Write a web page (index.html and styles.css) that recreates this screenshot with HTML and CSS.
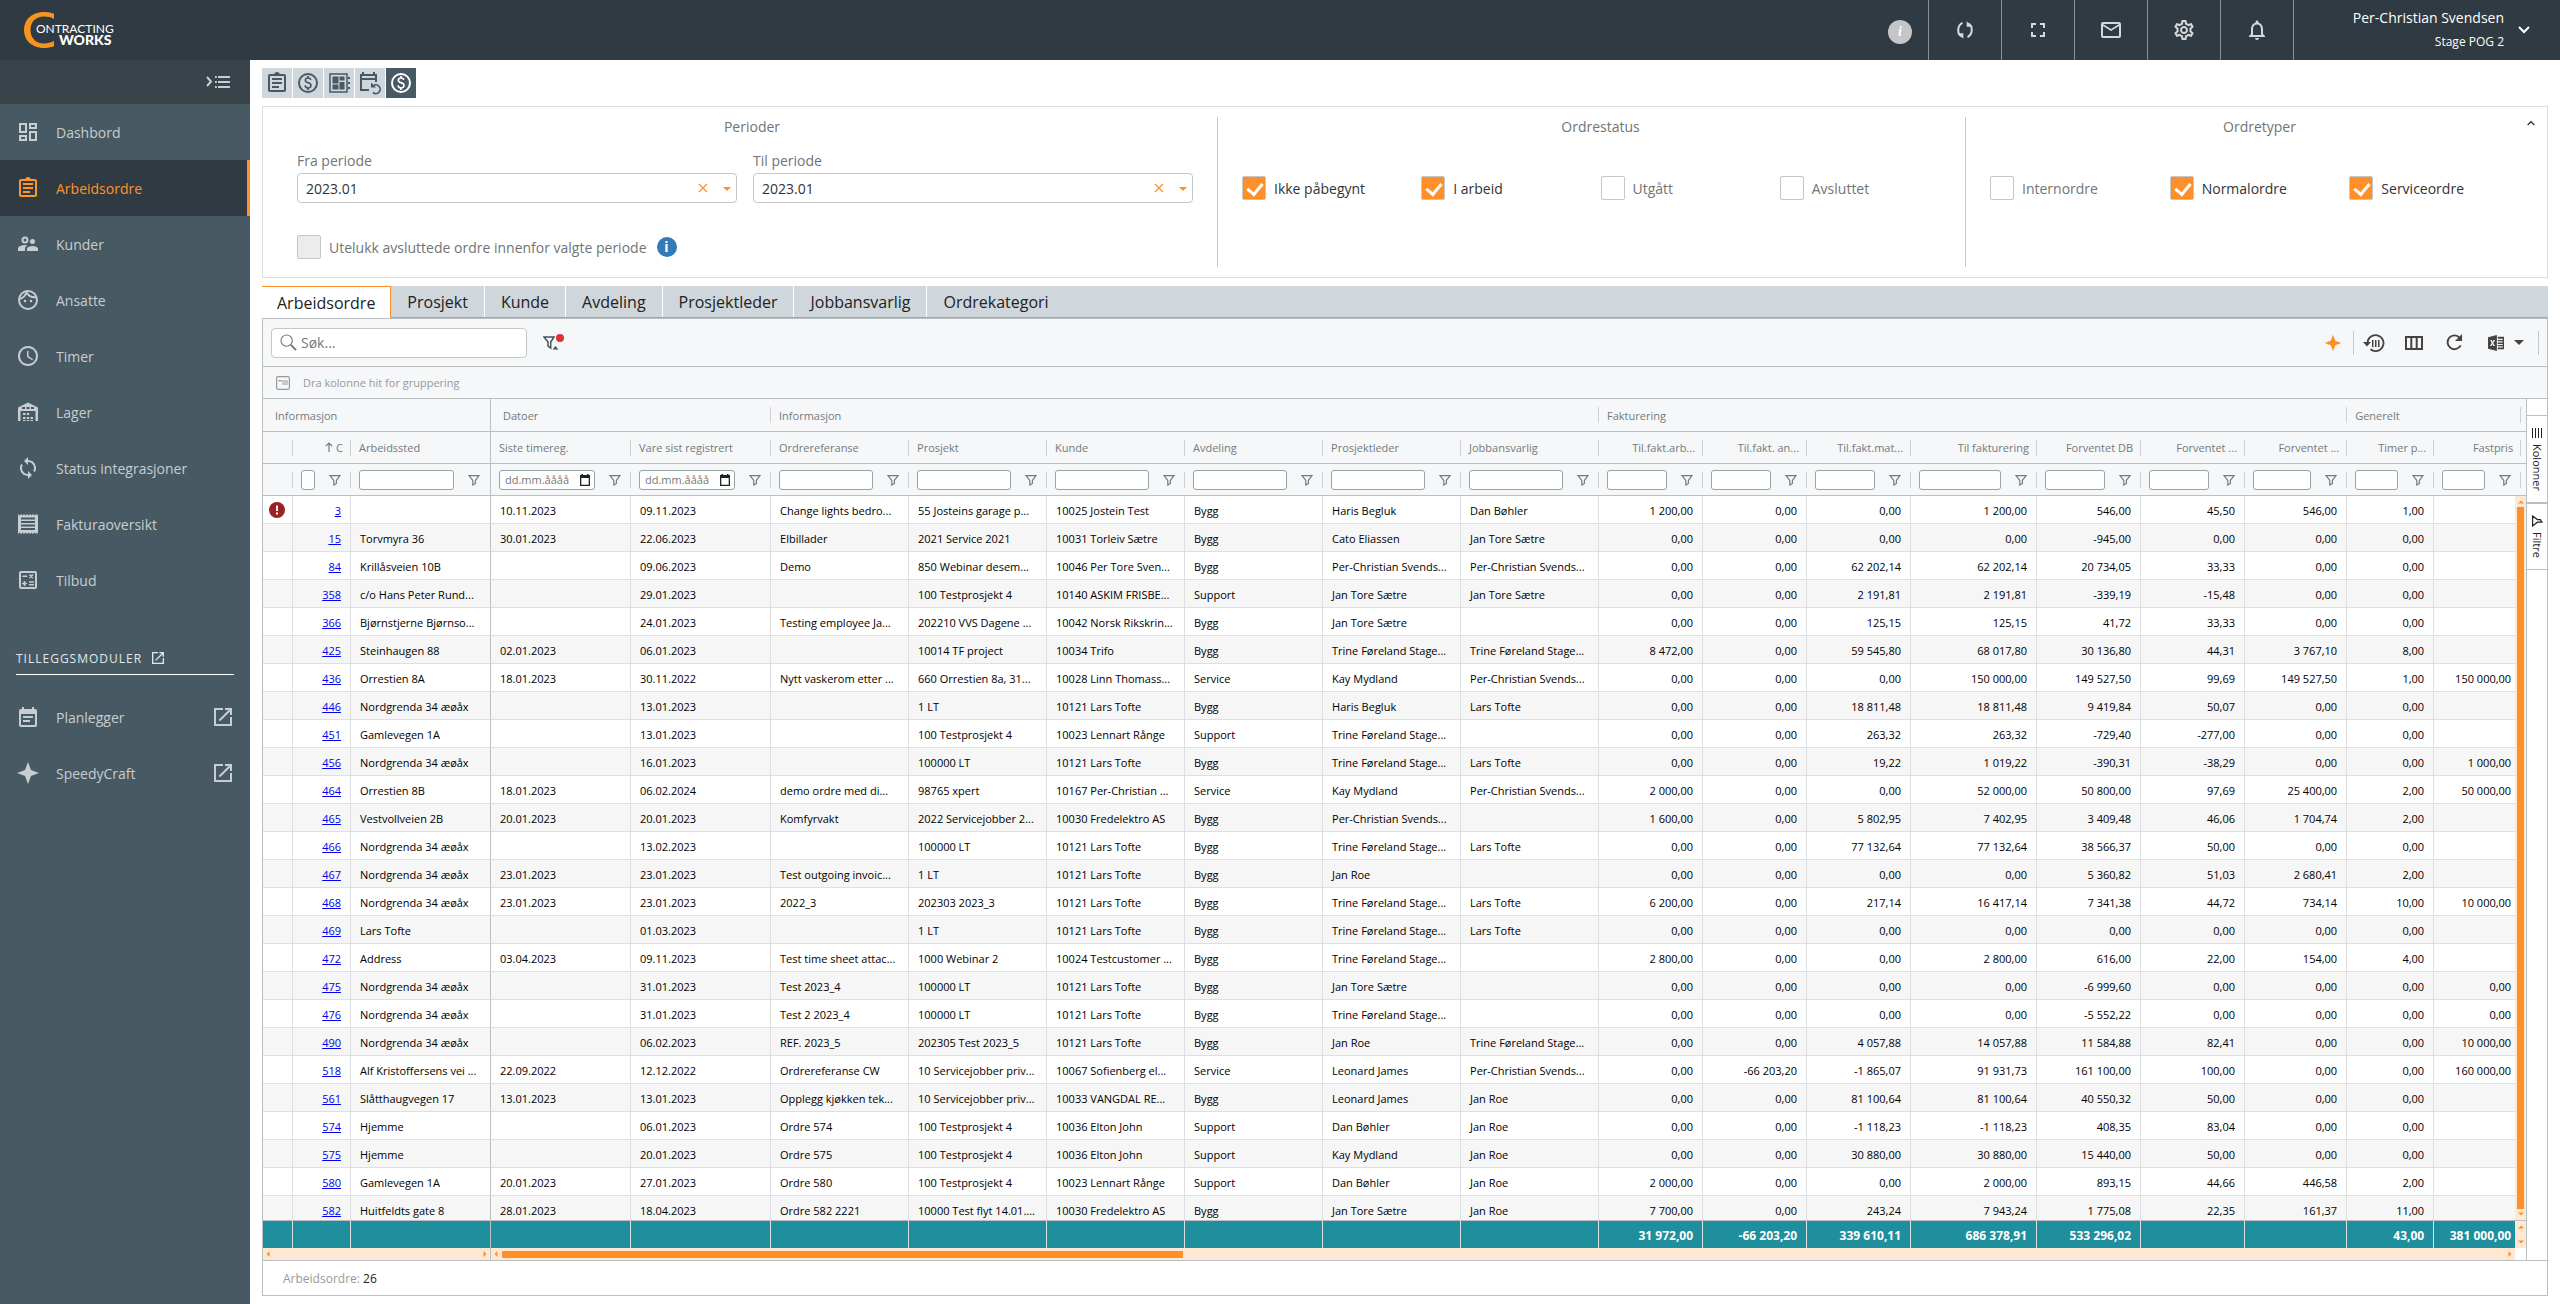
FILE: index.html
```html
<!DOCTYPE html>
<html lang="no">
<head>
    <meta charset="UTF-8">
    <meta name="viewport" content="width=device-width, initial-scale=1.0">
    <title>Contracting Works - Arbeidsordre</title>
    <link rel="stylesheet" href="styles.css">
</head>
<body>

<svg class="sprite" aria-hidden="true">
    <symbol id="i-dashboard" viewBox="0 0 24 24"><path d="M19 5v2h-4V5h4M9 5v6H5V5h4m10 8v6h-4v-6h4M9 17v2H5v-2h4M21 3h-8v6h8V3zM11 3H3v10h8V3zm10 8h-8v10h8V11zm-10 4H3v6h8v-6z"/></symbol>
    <symbol id="i-assignment" viewBox="0 0 24 24"><path d="M7 15h7v2H7zm0-4h10v2H7zm0-4h10v2H7zm12-4h-4.18C14.4 1.84 13.3 1 12 1c-1.3 0-2.4.84-2.82 2H5c-1.1 0-2 .9-2 2v14c0 1.1.9 2 2 2h14c1.1 0 2-.9 2-2V5c0-1.1-.9-2-2-2zm0 16H5V5h14v14z"/></symbol>
    <symbol id="i-people" viewBox="0 0 24 24"><path fill-rule="evenodd" d="M16.5 12a2.5 2.5 0 1 0 0-5 2.5 2.5 0 0 0 0 5zM9 11.500a3.500 3.500 0 1 0 0-7 3.500 3.500 0 0 0 0 7zm0-2a1.500 1.500 0 1 1 0-3 1.500 1.500 0 0 1 0 3zM16.5 14c-1.830 0-5.500.92-5.500 2.750V19h11v-2.250c0-1.830-3.670-2.750-5.500-2.750zM9 13c-2.330 0-7 1.170-7 3.500V19h7v-2.250c0-.85.33-2.340 2.370-3.470C10.500 13.100 9.660 13 9 13z"/></symbol>
    <symbol id="i-face" viewBox="0 0 24 24"><circle cx="12" cy="12" r="9" fill="none" stroke="currentColor" stroke-width="2"/><path fill="none" stroke="currentColor" stroke-width="2" d="M3.500 11c3.500-1 6-3.500 7-6.500 2 3.500 5.500 5 9.500 4.700"/><circle cx="9" cy="13" r="1.300"/><circle cx="15" cy="13" r="1.300"/></symbol>
    <symbol id="i-clock" viewBox="0 0 24 24"><path d="M11.990 2C6.470 2 2 6.480 2 12s4.470 10 9.990 10C17.520 22 22 17.520 22 12S17.520 2 11.990 2zM12 20c-4.420 0-8-3.580-8-8s3.580-8 8-8 8 3.580 8 8-3.580 8-8 8zm.5-13H11v6l5.250 3.150.75-1.230-4.500-2.670z"/></symbol>
    <symbol id="i-warehouse" viewBox="0 0 24 24"><path fill-rule="evenodd" d="M2 21V7.500L12 2.500l10 5V21h-2.500V11h-15v10zM6 9h3V7H6zm4.500 0h3V7h-3zM15 9h3V7h-3zM7 13h2.500v2H7zm3.800 0h2.400v2h-2.400zM7 17h2.500v2H7zm3.800 0h2.400v2h-2.400zm3.700 0H17v2h-2.500zM7 20h2.500v1H7zm3.800 0h2.400v1h-2.400zm3.700 0H17v1h-2.500z"/></symbol>
    <symbol id="i-sync" viewBox="0 0 24 24"><path d="M12 4V1L8 5l4 4V6c3.310 0 6 2.690 6 6 0 1.010-.25 1.970-.7 2.800l1.460 1.460C19.540 15.030 20 13.570 20 12c0-4.420-3.580-8-8-8zm0 14c-3.310 0-6-2.690-6-6 0-1.010.25-1.970.7-2.800L5.240 7.740C4.460 8.970 4 10.430 4 12c0 4.420 3.580 8 8 8v3l4-4-4-4v3z"/></symbol>
    <symbol id="i-receipt" viewBox="0 0 24 24"><path fill-rule="evenodd" d="M2 2l1.500 1.500L5 2l1.500 1.500L8 2l1.500 1.500L11 2l1.500 1.500L14 2l1.500 1.500L17 2l1.500 1.500L20 2l1 1.500L22 2v20l-1-1.500-1 1.500-1.500-1.500L17 22l-1.500-1.500L14 22l-1.500-1.500L11 22l-1.500-1.500L8 22l-1.500-1.500L5 22l-1.500-1.500L2 22zM5 5.500v2h14v-2zM5 9v2h14V9zm0 3.500v2h14v-2zM5 16v2h14v-2z"/></symbol>
    <symbol id="i-calc" viewBox="0 0 24 24"><path fill-rule="evenodd" d="M5 3h14a2 2 0 0 1 2 2v14a2 2 0 0 1-2 2H5a2 2 0 0 1-2-2V5a2 2 0 0 1 2-2zm0 2v14h14V5z"/><path fill="none" stroke="currentColor" stroke-width="1.600" d="M6.200 8.200h5M13.500 6.500l3.500 3.500m0-3.500L13.500 10M13 14h5M13 16.800h5M6 15.500h5M8.500 13v5"/></symbol>
    <symbol id="i-open" viewBox="0 0 24 24"><path d="M19 19H5V5h7V3H3v18h18v-9h-2v7zM14 3v2h3.590l-9.830 9.830 1.410 1.410L19 6.410V10h2V3h-7z"/></symbol>
    <symbol id="i-note" viewBox="0 0 24 24"><path d="M19 4h-1V2h-2v2H8V2H6v2H5a2 2 0 0 0-2 2v14a2 2 0 0 0 2 2h14a2 2 0 0 0 2-2V6a2 2 0 0 0-2-2zm0 16H5V9h14v11zM7 11h10v2H7zm0 4h7v2H7z"/></symbol>
    <symbol id="i-star" viewBox="0 0 24 24"><path d="M12 1l3 8 8 3-8 3-3 8-3-8-8-3 8-3z"/></symbol>
    <symbol id="i-menu" viewBox="0 0 24 16"><path d="M9 2h1.800v2H9zm3 0h12v2H12zM9 7h1.800v2H9zm3 0h12v2H12zM9 12h1.800v2H9zm3 0h12v2H12z"/><path fill="none" stroke="currentColor" stroke-width="2" d="M1 3l4 4.500L1 12"/></symbol>
    <symbol id="i-money" viewBox="0 0 24 24"><circle cx="12" cy="12" r="9" fill="none" stroke="currentColor" stroke-width="2"/><path d="M12.890 11.100c-1.780-.59-2.640-.96-2.640-1.900 0-1.020 1.110-1.390 1.810-1.390 1.310 0 1.790.99 1.900 1.340l1.580-.67c-.15-.44-.82-1.910-2.660-2.230V5h-1.750v1.260c-2.600.56-2.620 2.850-2.620 2.960 0 2.270 2.250 2.910 3.350 3.310 1.580.56 2.280 1.070 2.280 2.030 0 1.130-1.050 1.610-1.980 1.610-1.820 0-2.340-1.870-2.400-2.090l-1.660.67c.63 2.190 2.280 2.780 2.900 2.960V19h1.750v-1.240c.52-.09 3.020-.59 3.020-3.220.01-1.390-.6-2.610-3.010-3.440z"/></symbol>
    <symbol id="i-board" viewBox="0 0 24 24"><path fill="none" stroke="currentColor" stroke-width="1.500" d="M3 3h17v18H3z"/><path d="M5.500 5.500h6v7h-6zM5.500 13.500h6v5h-6zM12.500 5.500h5v4h-5zM12.500 11h5v7.500h-5zM21 6h2v2h-2zm0 5h2v2h-2zm0 5h2v2h-2z"/></symbol>
    <symbol id="i-calback" viewBox="0 0 24 24"><path d="M19 3h-2V1h-2v2H6V1H4v2H2v17h9v-2H4V9h13v2h2zM17 7H4V5h13z"/><path fill="none" stroke="currentColor" stroke-width="1.700" d="M15 21.500a4.300 4.300 0 1 0 0-6.500"/><path d="M13 11.500v5h5z"/></symbol>
    <symbol id="i-loop" viewBox="0 0 24 24"><path fill="none" stroke="currentColor" stroke-width="2.400" d="M9 3.500C2.500 6.500 2.500 16.500 7.500 19.500M15 20.500c6.500-3 6.500-13 1.500-16"/><path d="M2.500 16h7.500v6.500zM21.500 8H14V1.500z"/></symbol>
    <symbol id="i-full" viewBox="0 0 24 24"><path d="M5 5h5v2H7v3H5V5zm9 0h5v5h-2V7h-3V5zm3 9h2v5h-5v-2h3v-3zM5 14h2v3h3v2H5v-5z"/></symbol>
    <symbol id="i-mail" viewBox="0 0 24 24"><path d="M22 6c0-1.100-.9-2-2-2H4c-1.100 0-2 .9-2 2v12c0 1.100.9 2 2 2h16c1.100 0 2-.9 2-2V6zm-2 0l-8 5-8-5h16zm0 12H4V8l8 5 8-5v10z"/></symbol>
    <symbol id="i-gear" viewBox="0 0 24 24"><path d="M19.430 12.980c.04-.32.07-.64.07-.98 0-.34-.03-.66-.07-.98l2.110-1.650c.19-.15.24-.42.12-.64l-2-3.460c-.09-.16-.26-.25-.44-.25-.06 0-.12.01-.17.03l-2.490 1c-.52-.4-1.080-.73-1.690-.98l-.38-2.650C14.460 2.180 14.250 2 14 2h-4c-.25 0-.46.18-.49.42l-.38 2.650c-.61.25-1.170.59-1.690.98l-2.490-1c-.06-.02-.12-.03-.18-.03-.17 0-.34.09-.43.25l-2 3.460c-.13.22-.07.49.12.64l2.110 1.650c-.04.32-.07.65-.07.98 0 .33.03.66.07.98l-2.110 1.650c-.19.15-.24.42-.12.64l2 3.460c.09.16.26.25.44.25.06 0 .12-.01.17-.03l2.490-1c.52.4 1.080.73 1.690.98l.38 2.650c.03.24.24.42.49.42h4c.25 0 .46-.18.49-.42l.38-2.650c.61-.25 1.170-.59 1.690-.98l2.490 1c.06.02.12.03.18.03.17 0 .34-.09.43-.25l2-3.460c.12-.22.07-.49-.12-.64l-2.110-1.650zm-1.980-1.710c.04.31.05.52.05.73 0 .21-.02.43-.05.73l-.14 1.130.89.7 1.080.84-.7 1.210-1.270-.51-1.040-.42-.9.68c-.43.32-.84.56-1.250.73l-1.060.43-.16 1.130-.2 1.350h-1.400l-.19-1.350-.16-1.130-1.060-.43c-.43-.18-.83-.41-1.230-.71l-.91-.7-1.060.43-1.270.51-.7-1.210 1.080-.84.89-.7-.14-1.130c-.03-.31-.05-.54-.05-.74s.02-.43.05-.73l.14-1.130-.89-.7-1.080-.84.7-1.210 1.270.51 1.040.42.9-.68c.43-.32.84-.56 1.250-.73l1.060-.43.16-1.130.2-1.350h1.390l.19 1.350.16 1.130 1.060.43c.43.18.83.41 1.230.71l.91.7 1.060-.43 1.270-.51.7 1.210-1.070.85-.89.7.14 1.130zM12 8c-2.210 0-4 1.790-4 4s1.790 4 4 4 4-1.790 4-4-1.790-4-4-4zm0 6c-1.100 0-2-.9-2-2s.9-2 2-2 2 .9 2 2-.9 2-2 2z"/></symbol>
    <symbol id="i-bell" viewBox="0 0 24 24"><path d="M12 22c1.100 0 2-.9 2-2h-4c0 1.100.9 2 2 2zm6-6v-5c0-3.070-1.630-5.640-4.500-6.320V4c0-.83-.67-1.500-1.500-1.500s-1.500.67-1.500 1.500v.68C7.640 5.360 6 7.920 6 11v5l-2 2v1h16v-1l-2-2zm-2 1H8v-6c0-2.480 1.510-4.500 4-4.500s4 2.020 4 4.500v6z"/></symbol>
    <symbol id="i-chevron" viewBox="0 0 12 8"><path fill="none" stroke="currentColor" stroke-width="2" d="M1 1l5 5 5-5"/></symbol>
    <symbol id="i-caret" viewBox="0 0 8 4"><path d="M0 0h8L4 4z"/></symbol>
    <symbol id="i-cross" viewBox="0 0 10 10"><path fill="none" stroke="currentColor" stroke-width="1.200" d="M1 1l8 8m0-8L1 9"/></symbol>
    <symbol id="i-search" viewBox="0 0 18 18"><circle cx="7" cy="7" r="6" fill="none" stroke="currentColor" stroke-width="1.200"/><path stroke="currentColor" stroke-width="2" d="M11.500 11.500L17 17"/></symbol>
    <symbol id="i-funnel" viewBox="0 0 12 12"><path fill="none" stroke="currentColor" stroke-width="1.200" d="M1 1.600h10L7.400 6.400v3L4.800 11V6.400z"/></symbol>
    <symbol id="i-funneloff" viewBox="0 0 16 16"><path fill="none" stroke="currentColor" stroke-width="1.500" d="M1 2h10L7.700 7v6L5 11V7z"/><path d="M9.500 14.500h6l-3-3.500z"/></symbol>
    <symbol id="i-history" viewBox="0 0 22 22"><path fill="none" stroke="currentColor" stroke-width="1.800" d="M4.500 11a8 8 0 1 1 3 6.300"/><path d="M0 10h8l-4 4.500zM9 8h1.500v7H9zM12 8h1.500v7H12zM15 8h1.500v7H15z"/></symbol>
    <symbol id="i-columns" viewBox="0 0 18 16"><path fill="none" stroke="currentColor" stroke-width="2" d="M1 2h16v12H1zM6.300 2v12M11.700 2v12"/></symbol>
    <symbol id="i-refresh" viewBox="0 0 18 18"><path fill="none" stroke="currentColor" stroke-width="2" d="M15.500 12A7.300 7.300 0 1 1 14.500 4"/><path d="M17 0v7.500H9.500z"/></symbol>
    <symbol id="i-excel" viewBox="0 0 18 18"><path fill-rule="evenodd" d="M0 2.500L10 0v18L0 15.500zM2.300 5.500L4.200 9l-2 3.500h1.700L5 10.300l1.200 2.200h1.700L5.900 9l2-3.500H6.200L5.100 7.700 4 5.500z"/><path fill-rule="evenodd" d="M11 2h7v14h-7v-2h5.500v-1.300H11v-1.400h5.500V10H11V8.500h5.500V7H11V5.700h5.500V4.300H11z"/></symbol>
    <symbol id="i-group" viewBox="0 0 14 14"><rect x=".6" y=".6" width="12.800" height="12.800" rx="1.500" fill="none" stroke="currentColor" stroke-width="1.200"/><path d="M2.500 4h3v1.500h-3zM6.500 4h1v5h-1zM8.500 4h1v5h-1zM10.500 4h1v5h-1z"/></symbol>
    <symbol id="i-calendar" viewBox="0 0 10 12"><path fill-rule="evenodd" d="M1.500 0H3v1h4V0h1.500v1H10v11H0V1h1.500zM1.300 4v6.700h7.400V4z"/></symbol>
    <symbol id="i-bars" viewBox="0 0 12 12"><path d="M1 1h10v1H1zm0 3h10v1H1zm0 3h10v1H1zm0 3h10v1H1z"/></symbol>
    <symbol id="i-sort" viewBox="0 0 8 10"><path fill="none" stroke="currentColor" stroke-width="1.200" d="M4 10V1M.8 4.200L4 1l3.200 3.200"/></symbol>
    <symbol id="i-error" viewBox="0 0 16 16"><circle cx="8" cy="8" r="8" fill="#9b2122"/><path fill="#fff" d="M7 3.500h2V9H7zM7 10.500h2v2H7z"/></symbol>
</svg>

<header class="topbar">
    <svg class="logo" viewBox="0 0 100 40" role="img" aria-label="Contracting Works">
        <path fill="#f7941e" d="M31 3.800C27 2.300 22 1.600 17.500 2.200 7.500 3.500 1 10.500 1 20s6.500 16.500 16.500 17.800c4.500.6 9.500-.1 13.500-1.600V31c-4 2-8 2.800-12.500 2.200C11.500 32.200 7.500 27 7.500 20s4-12.200 11-13.200C23 6.200 27 7 31 9z"/>
        <text class="logo-top" x="13" y="23">ONTRACTING</text>
        <text class="logo-bottom" x="36" y="35">WORKS</text>
    </svg>
    <nav class="top-actions">
        <button class="top-btn info" aria-label="Info"><span class="info-dot">i</span></button>
        <button class="top-btn" aria-label="Synkroniser"><svg width="20" height="20"><use href="#i-loop"/></svg></button>
        <button class="top-btn" aria-label="Fullskjerm"><svg width="24" height="24"><use href="#i-full"/></svg></button>
        <button class="top-btn" aria-label="Meldinger"><svg width="24" height="24"><use href="#i-mail"/></svg></button>
        <button class="top-btn" aria-label="Innstillinger"><svg width="24" height="24"><use href="#i-gear"/></svg></button>
        <button class="top-btn" aria-label="Varsler"><svg width="24" height="24"><use href="#i-bell"/></svg></button>
        <button class="user">
            <span class="user-text">
                <span class="user-name">Per-Christian Svendsen</span>
                <span class="user-company">Stage POG 2</span>
            </span>
            <svg width="12" height="8"><use href="#i-chevron"/></svg>
        </button>
    </nav>
</header>

<div class="layout">
    <aside class="sidebar">
        <button class="collapse" aria-label="Skjul meny"><svg width="24" height="16"><use href="#i-menu"/></svg></button>
        <a class="nav-item" href="#"><svg><use href="#i-dashboard"/></svg>Dashbord</a>
        <a class="nav-item active" href="#"><svg><use href="#i-assignment"/></svg>Arbeidsordre</a>
        <a class="nav-item" href="#"><svg><use href="#i-people"/></svg>Kunder</a>
        <a class="nav-item" href="#"><svg><use href="#i-face"/></svg>Ansatte</a>
        <a class="nav-item" href="#"><svg><use href="#i-clock"/></svg>Timer</a>
        <a class="nav-item" href="#"><svg><use href="#i-warehouse"/></svg>Lager</a>
        <a class="nav-item" href="#"><svg><use href="#i-sync"/></svg>Status integrasjoner</a>
        <a class="nav-item" href="#"><svg><use href="#i-receipt"/></svg>Fakturaoversikt</a>
        <a class="nav-item" href="#"><svg><use href="#i-calc"/></svg>Tilbud</a>
        <div class="nav-heading">TILLEGGSMODULER<svg><use href="#i-open"/></svg></div>
        <a class="nav-item" href="#"><svg><use href="#i-note"/></svg>Planlegger<svg class="ext"><use href="#i-open"/></svg></a>
        <a class="nav-item" href="#"><svg><use href="#i-star"/></svg>SpeedyCraft<svg class="ext"><use href="#i-open"/></svg></a>
    </aside>

    <main class="content">
        <div class="modes">
            <button class="mode" aria-label="Arbeidsordre"><svg><use href="#i-assignment"/></svg></button>
            <button class="mode" aria-label="Fakturering"><svg><use href="#i-money"/></svg></button>
            <button class="mode" aria-label="Tavle"><svg><use href="#i-board"/></svg></button>
            <button class="mode" aria-label="Periode"><svg><use href="#i-calback"/></svg></button>
            <button class="mode selected" aria-label="Økonomi"><svg><use href="#i-money"/></svg></button>
        </div>

        <section class="filters">
            <div class="filter-col periods">
                <h2>Perioder</h2>
                <div class="combos">
                    <div class="field">
                        <label for="from">Fra periode</label>
                        <div class="combo">
                            <select id="from"><option>2023.01</option></select>
                            <button class="clear" aria-label="Tøm"><svg width="10" height="10"><use href="#i-cross"/></svg></button>
                            <svg class="caret" width="8" height="4"><use href="#i-caret"/></svg>
                        </div>
                    </div>
                    <div class="field">
                        <label for="to">Til periode</label>
                        <div class="combo">
                            <select id="to"><option>2023.01</option></select>
                            <button class="clear" aria-label="Tøm"><svg width="10" height="10"><use href="#i-cross"/></svg></button>
                            <svg class="caret" width="8" height="4"><use href="#i-caret"/></svg>
                        </div>
                    </div>
                </div>
                <div class="exclude">
                    <label class="check"><input type="checkbox" disabled>Utelukk avsluttede ordre innenfor valgte periode</label>
                    <span class="help">i</span>
                </div>
            </div>
            <div class="filter-col status">
                <h2>Ordrestatus</h2>
                <div class="checks">
                    <label class="check"><input type="checkbox" checked>Ikke påbegynt</label>
                    <label class="check"><input type="checkbox" checked>I arbeid</label>
                    <label class="check"><input type="checkbox">Utgått</label>
                    <label class="check"><input type="checkbox">Avsluttet</label>
                </div>
            </div>
            <div class="filter-col types">
                <h2>Ordretyper</h2>
                <div class="checks">
                    <label class="check"><input type="checkbox">Internordre</label>
                    <label class="check"><input type="checkbox" checked>Normalordre</label>
                    <label class="check"><input type="checkbox" checked>Serviceordre</label>
                </div>
                <button class="fold" aria-label="Skjul filter"><svg width="8" height="6"><use href="#i-chevron"/></svg></button>
            </div>
        </section>

        <div class="tabs" role="tablist">
            <button class="tab active" role="tab">Arbeidsordre</button>
            <button class="tab" role="tab">Prosjekt</button>
            <button class="tab" role="tab">Kunde</button>
            <button class="tab" role="tab">Avdeling</button>
            <button class="tab" role="tab">Prosjektleder</button>
            <button class="tab" role="tab">Jobbansvarlig</button>
            <button class="tab" role="tab">Ordrekategori</button>
        </div>

        <section class="grid">
            <div class="grid-toolbar">
                <div class="search">
                    <svg width="17" height="17"><use href="#i-search"/></svg>
                    <input type="text" placeholder="Søk..." aria-label="Søk">
                </div>
                <button class="reset" aria-label="Nullstill filter"><svg width="16" height="16"><use href="#i-funneloff"/></svg><span class="dot"></span></button>
                <div class="tools">
                    <button class="tool accent" aria-label="Assistent"><svg width="18" height="18"><use href="#i-star"/></svg></button>
                    <span class="divider"></span>
                    <button class="tool" aria-label="Tilbakestill kolonner"><svg width="22" height="22"><use href="#i-history"/></svg></button>
                    <button class="tool" aria-label="Kolonner"><svg width="18" height="16"><use href="#i-columns"/></svg></button>
                    <button class="tool" aria-label="Oppdater"><svg width="17" height="17"><use href="#i-refresh"/></svg></button>
                    <button class="tool excel" aria-label="Eksporter til Excel"><svg width="16" height="16"><use href="#i-excel"/></svg><svg width="10" height="5"><use href="#i-caret"/></svg></button>
                    <span class="divider"></span>
                </div>
            </div>
            <div class="group-drop"><svg width="14" height="14"><use href="#i-group"/></svg>Dra kolonne hit for gruppering</div>
            <div class="grid-body">
                <div class="grid-main">
                    <div class="table-wrap">
                        <div class="table-scroll">
                            <table id="orders">
                                <colgroup></colgroup>
                                <thead></thead>
                                <tbody></tbody>
                                <tfoot></tfoot>
                            </table>
                        </div>
                        <div class="vscroll rows"><svg class="up" width="6" height="4"><use href="#i-caret"/></svg><span class="thumb"></span><svg width="6" height="4"><use href="#i-caret"/></svg></div>
                        <div class="vscroll totals"><svg class="up" width="6" height="4"><use href="#i-caret"/></svg><svg width="6" height="4"><use href="#i-caret"/></svg></div>
                    </div>
                    <div class="hscroll">
                        <div class="track pinned"><svg class="left" width="6" height="4"><use href="#i-caret"/></svg><span class="rail"></span><svg class="right" width="6" height="4"><use href="#i-caret"/></svg></div>
                        <div class="track"><svg class="left" width="6" height="4"><use href="#i-caret"/></svg><span class="rail"><span class="thumb"></span></span><svg class="right" width="6" height="4"><use href="#i-caret"/></svg></div>
                    </div>
                </div>
                <div class="side-tabs">
                    <button class="side-tab"><svg class="bars" width="12" height="12"><use href="#i-bars"/></svg>Kolonner</button>
                    <button class="side-tab"><svg width="12" height="12"><use href="#i-funnel"/></svg>Filtre</button>
                </div>
            </div>
            <div class="status-bar">Arbeidsordre: <b>26</b></div>
        </section>
    </main>
</div>

<script>
    // name, width, type
    const columns = [
        ['', 30, 'icon'],
        ['C', 58, 'link'],
        ['Arbeidssted', 140, 'text'],
        ['Siste timereg.', 140, 'date'],
        ['Vare sist registrert', 140, 'date'],
        ['Ordrereferanse', 138, 'text'],
        ['Prosjekt', 138, 'text'],
        ['Kunde', 138, 'text'],
        ['Avdeling', 138, 'text'],
        ['Prosjektleder', 138, 'text'],
        ['Jobbansvarlig', 138, 'text'],
        ['Til.fakt.arb...', 104, 'num'],
        ['Til.fakt. an...', 104, 'num'],
        ['Til.fakt.mat...', 104, 'num'],
        ['Til fakturering', 126, 'num'],
        ['Forventet DB', 104, 'num'],
        ['Forventet ...', 104, 'num'],
        ['Forventet ...', 102, 'num'],
        ['Timer p...', 87, 'num'],
        ['Fastpris', 87, 'num']
    ];

    const groups = [['Informasjon', 3], ['Datoer', 2], ['Informasjon', 6], ['Fakturering', 7], ['Generelt', 2]];

    const rows = [
        '3||10.11.2023|09.11.2023|Change lights bedro...|55 Josteins garage p...|10025 Jostein Test|Bygg|Haris Begluk|Dan Bøhler|1 200,00|0,00|0,00|1 200,00|546,00|45,50|546,00|1,00|',
        '15|Torvmyra 36|30.01.2023|22.06.2023|Elbillader|2021 Service 2021|10031 Torleiv Sætre|Bygg|Cato Eliassen|Jan Tore Sætre|0,00|0,00|0,00|0,00|-945,00|0,00|0,00|0,00|',
        '84|Krillåsveien 10B||09.06.2023|Demo|850 Webinar desem...|10046 Per Tore Sven...|Bygg|Per-Christian Svends...|Per-Christian Svends...|0,00|0,00|62 202,14|62 202,14|20 734,05|33,33|0,00|0,00|',
        '358|c/o Hans Peter Rund...||29.01.2023||100 Testprosjekt 4|10140 ASKIM FRISBE...|Support|Jan Tore Sætre|Jan Tore Sætre|0,00|0,00|2 191,81|2 191,81|-339,19|-15,48|0,00|0,00|',
        '366|Bjørnstjerne Bjørnso...||24.01.2023|Testing employee Ja...|202210 VVS Dagene ...|10042 Norsk Rikskrin...|Bygg|Jan Tore Sætre||0,00|0,00|125,15|125,15|41,72|33,33|0,00|0,00|',
        '425|Steinhaugen 88|02.01.2023|06.01.2023||10014 TF project|10034 Trifo|Bygg|Trine Føreland Stage...|Trine Føreland Stage...|8 472,00|0,00|59 545,80|68 017,80|30 136,80|44,31|3 767,10|8,00|',
        '436|Orrestien 8A|18.01.2023|30.11.2022|Nytt vaskerom etter ...|660 Orrestien 8a, 31...|10028 Linn Thomass...|Service|Kay Mydland|Per-Christian Svends...|0,00|0,00|0,00|150 000,00|149 527,50|99,69|149 527,50|1,00|150 000,00',
        '446|Nordgrenda 34 æøåx||13.01.2023||1 LT|10121 Lars Tofte|Bygg|Haris Begluk|Lars Tofte|0,00|0,00|18 811,48|18 811,48|9 419,84|50,07|0,00|0,00|',
        '451|Gamlevegen 1A||13.01.2023||100 Testprosjekt 4|10023 Lennart Rånge|Support|Trine Føreland Stage...||0,00|0,00|263,32|263,32|-729,40|-277,00|0,00|0,00|',
        '456|Nordgrenda 34 æøåx||16.01.2023||100000 LT|10121 Lars Tofte|Bygg|Trine Føreland Stage...|Lars Tofte|0,00|0,00|19,22|1 019,22|-390,31|-38,29|0,00|0,00|1 000,00',
        '464|Orrestien 8B|18.01.2023|06.02.2024|demo ordre med di...|98765 xpert|10167 Per-Christian ...|Service|Kay Mydland|Per-Christian Svends...|2 000,00|0,00|0,00|52 000,00|50 800,00|97,69|25 400,00|2,00|50 000,00',
        '465|Vestvollveien 2B|20.01.2023|20.01.2023|Komfyrvakt|2022 Servicejobber 2...|10030 Fredelektro AS|Bygg|Per-Christian Svends...||1 600,00|0,00|5 802,95|7 402,95|3 409,48|46,06|1 704,74|2,00|',
        '466|Nordgrenda 34 æøåx||13.02.2023||100000 LT|10121 Lars Tofte|Bygg|Trine Føreland Stage...|Lars Tofte|0,00|0,00|77 132,64|77 132,64|38 566,37|50,00|0,00|0,00|',
        '467|Nordgrenda 34 æøåx|23.01.2023|23.01.2023|Test outgoing invoic...|1 LT|10121 Lars Tofte|Bygg|Jan Roe||0,00|0,00|0,00|0,00|5 360,82|51,03|2 680,41|2,00|',
        '468|Nordgrenda 34 æøåx|23.01.2023|23.01.2023|2022_3|202303 2023_3|10121 Lars Tofte|Bygg|Trine Føreland Stage...|Lars Tofte|6 200,00|0,00|217,14|16 417,14|7 341,38|44,72|734,14|10,00|10 000,00',
        '469|Lars Tofte||01.03.2023||1 LT|10121 Lars Tofte|Bygg|Trine Føreland Stage...|Lars Tofte|0,00|0,00|0,00|0,00|0,00|0,00|0,00|0,00|',
        '472|Address|03.04.2023|09.11.2023|Test time sheet attac...|1000 Webinar 2|10024 Testcustomer ...|Bygg|Trine Føreland Stage...||2 800,00|0,00|0,00|2 800,00|616,00|22,00|154,00|4,00|',
        '475|Nordgrenda 34 æøåx||31.01.2023|Test 2023_4|100000 LT|10121 Lars Tofte|Bygg|Jan Tore Sætre||0,00|0,00|0,00|0,00|-6 999,60|0,00|0,00|0,00|0,00',
        '476|Nordgrenda 34 æøåx||31.01.2023|Test 2 2023_4|100000 LT|10121 Lars Tofte|Bygg|Trine Føreland Stage...||0,00|0,00|0,00|0,00|-5 552,22|0,00|0,00|0,00|0,00',
        '490|Nordgrenda 34 æøåx||06.02.2023|REF. 2023_5|202305 Test 2023_5|10121 Lars Tofte|Bygg|Jan Roe|Trine Føreland Stage...|0,00|0,00|4 057,88|14 057,88|11 584,88|82,41|0,00|0,00|10 000,00',
        '518|Alf Kristoffersens vei ...|22.09.2022|12.12.2022|Ordrereferanse CW|10 Servicejobber priv...|10067 Sofienberg el...|Service|Leonard James|Per-Christian Svends...|0,00|-66 203,20|-1 865,07|91 931,73|161 100,00|100,00|0,00|0,00|160 000,00',
        '561|Slåtthaugvegen 17|13.01.2023|13.01.2023|Opplegg kjøkken tek...|10 Servicejobber priv...|10033 VANGDAL RE...|Bygg|Leonard James|Jan Roe|0,00|0,00|81 100,64|81 100,64|40 550,32|50,00|0,00|0,00|',
        '574|Hjemme||06.01.2023|Ordre 574|100 Testprosjekt 4|10036 Elton John|Support|Dan Bøhler|Jan Roe|0,00|0,00|-1 118,23|-1 118,23|408,35|83,04|0,00|0,00|',
        '575|Hjemme||20.01.2023|Ordre 575|100 Testprosjekt 4|10036 Elton John|Support|Kay Mydland|Jan Roe|0,00|0,00|30 880,00|30 880,00|15 440,00|50,00|0,00|0,00|',
        '580|Gamlevegen 1A|20.01.2023|27.01.2023|Ordre 580|100 Testprosjekt 4|10023 Lennart Rånge|Support|Dan Bøhler|Jan Roe|2 000,00|0,00|0,00|2 000,00|893,15|44,66|446,58|2,00|',
        '582|Huitfeldts gate 8|28.01.2023|18.04.2023|Ordre 582 2221|10000 Test flyt 14.01....|10030 Fredelektro AS|Bygg|Jan Tore Sætre|Jan Roe|7 700,00|0,00|243,24|7 943,24|1 775,08|22,35|161,37|11,00|'
    ];

    const totals = '||||||||||31 972,00|-66 203,20|339 610,11|686 378,91|533 296,02|||43,00|381 000,00';

    const icon = (id, w, h) => `<svg width="${w}" height="${h}"><use href="#i-${id}"/></svg>`;
    const cellClass = (i) => columns[i][2] + (i === 2 ? ' pin-end' : '');

    function filterCell(col, i) {
        if (col[2] === 'icon') return '<td class="icon"></td>';
        const input = col[2] === 'date'
            ? `<span class="filter-input date"><input type="text" placeholder="dd.mm.åååå" aria-label="${col[0]}">${icon('calendar', 10, 12)}</span>`
            : `<input class="filter-input" type="text" aria-label="${col[0]}">`;
        return `<td class="${cellClass(i)}"><div class="filter-cell">${input}<button aria-label="Filter">${icon('funnel', 12, 12)}</button></div></td>`;
    }

    function bodyCell(value, i) {
        let html = value;
        if (columns[i][2] === 'link') html = `<a href="#">${value}</a>`;
        return `<td class="${cellClass(i)}">${html}</td>`;
    }

    const table = document.getElementById('orders');
    table.querySelector('colgroup').innerHTML = columns.map(c => `<col style="width:${c[1]}px">`).join('') + '<col>';

    table.tHead.innerHTML =
        '<tr class="group-row">' + groups.map((g, i) => `<th colspan="${g[1]}" class="${i === 0 ? 'pin-end wide' : i === 1 ? 'wide' : ''}">${g[0]}</th>`).join('') + '<th class="filler"></th></tr>' +
        '<tr class="name-row">' + columns.map((c, i) => `<th class="${cellClass(i)}">${c[2] === 'link' ? icon('sort', 8, 10) + ' ' : ''}${c[0]}</th>`).join('') + '<th class="filler"></th></tr>' +
        '<tr class="filter-row">' + columns.map(filterCell).join('') + '<td class="filler"></td></tr>';

    table.tBodies[0].innerHTML = rows.map((row, r) => {
        const flag = r === 0 ? icon('error', 16, 16) : '';
        return '<tr>' + [flag, ...row.split('|')].map(bodyCell).join('') + '<td class="filler"></td></tr>';
    }).join('');

    table.tFoot.innerHTML = '<tr>' + ['', ...totals.split('|')].map((v, i) => `<td class="${cellClass(i)}">${v}</td>`).join('') + '<td class="filler"></td></tr>';
</script>

</body>
</html>
```

FILE: styles.css
```css
* {
    box-sizing: border-box;
}
body {
    font-family: "Open Sans", "Noto Sans", sans-serif;
    font-size: 14px;
    color: #333;
    background-color: #fff;
    margin: 0;
    height: 100vh;
    display: flex;
    flex-direction: column;
    overflow: hidden;
}
button, input, select {
    font: inherit;
    color: inherit;
}
button {
    background: none;
    border: 0;
    padding: 0;
    cursor: pointer;
}
svg {
    fill: currentColor;
    flex: none;
    display: block;
}
.sprite {
    display: none;
}

/* top bar */
.topbar {
    background-color: #303a42;
    color: #d5d9db;
    height: 60px;
    display: flex;
    justify-content: space-between;
    align-items: center;
    flex: none;
}
.logo {
    width: 100px;
    height: 40px;
    margin-left: 23px;
}
.logo-top, .logo-bottom {
    font-family: Lato, sans-serif;
    fill: #fff;
}
.logo-top {
    font-size: 12px;
}
.logo-bottom {
    font-size: 14px;
    font-weight: 900;
}
.top-actions {
    display: flex;
    align-self: stretch;
}
.top-btn {
    width: 73px;
    border-right: 1px solid #8a9196;
    display: flex;
    align-items: center;
    justify-content: center;
}
.top-btn.info {
    width: 57px;
}
.info-dot {
    width: 24px;
    height: 24px;
    margin-top: 4px;
    border-radius: 50%;
    background-color: #c4c6c8;
    color: #fff;
    font: italic bold 14px/24px "Liberation Serif", serif;
}
.user {
    width: 266px;
    padding-right: 30px;
    display: flex;
    align-items: center;
    justify-content: flex-end;
    gap: 14px;
    color: #fff;
}
.user-text {
    display: flex;
    flex-direction: column;
    text-align: right;
}
.user-name {
    font-size: 14px;
    line-height: 24px;
}
.user-company {
    font-size: 12px;
    line-height: 24px;
}

/* sidebar */
.layout {
    flex: 1;
    min-height: 0;
    display: flex;
}
.sidebar {
    width: 250px;
    flex: none;
    background-color: #475963;
}
.collapse {
    width: 100%;
    height: 44px;
    padding-right: 20px;
    background-color: #38434a;
    color: #c8cdd0;
    display: flex;
    align-items: center;
    justify-content: flex-end;
}
.nav-item {
    height: 56px;
    padding: 0 15px 0 16px;
    display: flex;
    align-items: center;
    gap: 16px;
    color: #c8cdd0;
    text-decoration: none;
    font-size: 14px;
}
.nav-item svg {
    width: 24px;
    height: 24px;
}
.nav-item .ext {
    margin-left: auto;
}
.nav-item.active {
    background-color: #303a42;
    color: #ff9429;
    border-right: 3px solid #ff9429;
}
.nav-heading {
    margin: 36px 16px 14px;
    height: 31px;
    padding-bottom: 2px;
    border-bottom: 1px solid #fff;
    color: #e4e7e8;
    font-size: 12px;
    font-weight: 500;
    letter-spacing: 1px;
    display: flex;
    align-items: center;
    gap: 8px;
}
.nav-heading svg {
    width: 16px;
    height: 16px;
}

/* content */
.content {
    flex: 1;
    min-width: 0;
    padding: 8px 12px;
    display: flex;
    flex-direction: column;
}
.modes {
    display: flex;
    gap: 1px;
}
.mode {
    width: 30px;
    height: 30px;
    background-color: #cfd6dc;
    color: #475963;
    display: flex;
    align-items: center;
    justify-content: center;
}
.mode svg {
    width: 24px;
    height: 24px;
}
.mode.selected {
    background-color: #475963;
    color: #fff;
}
.filters {
    margin: 8px 0;
    height: 172px;
    flex: none;
    padding: 10px 0;
    border: 1px solid #ddd;
    display: grid;
    grid-template-columns: 955fr 748fr 581fr;
}
.filter-col {
    position: relative;
    border-right: 1px solid #c8cacc;
}
.filter-col:last-child {
    border-right: 0;
}
.periods {
    padding-left: 24px;
}
.status {
    padding: 0 6px 0 24px;
}
.types {
    padding: 0 18px 0 24px;
}
.filter-col h2 {
    margin: 0;
    font-size: 14px;
    font-weight: 400;
    line-height: 20px;
    color: #707578;
    text-align: center;
}
.combos {
    display: flex;
    gap: 16px;
    margin: 14px 24px 0 10px;
}
.field {
    flex: 1;
}
.field label {
    display: block;
    line-height: 20px;
    margin-bottom: 2px;
    color: #707578;
}
.combo {
    position: relative;
}
.combo select {
    appearance: none;
    width: 100%;
    height: 30px;
    padding: 0 50px 0 8px;
    border: 1px solid #c4c6c8;
    border-radius: 4px;
    background-color: #fff;
}
.combo .clear, .combo .caret {
    position: absolute;
    color: #ff9029;
}
.combo .clear {
    right: 29px;
    top: 10px;
}
.combo .caret {
    right: 6px;
    top: 14px;
}
.exclude {
    display: flex;
    align-items: center;
    gap: 10px;
    margin: 32px 24px 0 10px;
}
.help {
    width: 20px;
    height: 20px;
    border-radius: 50%;
    background-color: #337ab7;
    color: #fff;
    font-weight: 700;
    line-height: 20px;
    text-align: center;
}
.checks {
    display: flex;
    margin-top: 39px;
}
.checks .check {
    flex: 1;
}
.check {
    display: flex;
    align-items: center;
    gap: 8px;
    color: #707578;
}
.check:has(:checked) {
    color: #333;
}
.check input {
    appearance: none;
    width: 24px;
    height: 24px;
    margin: 0;
    border: 1px solid #c4c6c8;
    border-radius: 2px;
    background-color: #fff;
}
.check input:checked {
    background-color: #ff9029;
}
.check input:checked::after {
    content: "";
    display: block;
    width: 7px;
    height: 12px;
    margin: 3px 0 0 7px;
    border: solid #fff;
    border-width: 0 3px 3px 0;
    transform: rotate(40deg);
}
.check input:disabled {
    background-color: #ececec;
}
.fold {
    position: absolute;
    top: 3px;
    right: 12px;
    transform: rotate(180deg);
}

/* tabs */
.tabs {
    display: flex;
    flex: none;
    height: 32px;
    background-color: #cfd6dc;
    border-bottom: 1px solid #ff9029;
}
.tab {
    padding: 0 16px;
    border-right: 1px solid #fff;
    font-size: 16px;
    color: #222;
}
.tab:last-child {
    border-right: 0;
}
.tab.active {
    height: 32px;
    padding: 0 15px;
    background-color: #fff;
    border-top: 1px solid #ff9029;
    border-right: 1px solid #ff9029;
}

/* grid */
.grid {
    flex: 1;
    min-height: 0;
    border: 1px solid #babfc2;
    display: flex;
    flex-direction: column;
    font-size: 11px;
}
.grid-toolbar {
    height: 48px;
    flex: none;
    padding: 0 8px;
    background-color: #f5f7f8;
    border-bottom: 1px solid #babfc2;
    display: flex;
    align-items: center;
}
.search {
    width: 256px;
    height: 30px;
    padding: 0 8px;
    border: 1px solid #c4c6c8;
    border-radius: 4px;
    background-color: #fff;
    color: #777;
    display: flex;
    align-items: center;
    gap: 4px;
}
.search input {
    flex: 1;
    min-width: 0;
    border: 0;
    padding: 0;
    outline: 0;
    font-size: 14px;
}
.reset {
    position: relative;
    margin-left: 16px;
    color: #4a5358;
}
.reset .dot {
    position: absolute;
    top: -1px;
    right: -5px;
    width: 8px;
    height: 8px;
    border-radius: 50%;
    background-color: #dc3535;
}
.tools {
    margin-left: auto;
    display: flex;
    align-items: center;
    color: #444;
}
.tool {
    width: 40px;
    display: flex;
    align-items: center;
    justify-content: center;
}
.tool.accent {
    color: #ff8f1f;
}
.tool.excel {
    width: 64px;
    gap: 10px;
}
.divider {
    width: 1px;
    height: 24px;
    background-color: #c4c6c8;
}
.group-drop {
    height: 32px;
    flex: none;
    padding: 0 13px;
    background-color: #f5f7f8;
    border-bottom: 1px solid #babfc2;
    color: #999;
    display: flex;
    align-items: center;
    gap: 13px;
}
.grid-body {
    flex: 1;
    min-height: 0;
    display: flex;
}
.grid-main {
    flex: 1;
    min-width: 0;
    display: flex;
    flex-direction: column;
}
.table-wrap {
    position: relative;
    flex: 1;
    min-height: 0;
}
.table-scroll {
    height: 100%;
    overflow: hidden;
}
table {
    width: 100%;
    table-layout: fixed;
    border-collapse: separate;
    border-spacing: 0;
}
th, td {
    height: 28px;
    padding: 1px 9px 0;
    text-align: left;
    white-space: nowrap;
    overflow: hidden;
    border-right: 1px solid #dddfe0;
    border-bottom: 1px solid #dddfe0;
}
thead th, thead td {
    position: relative;
    height: 32px;
    padding: 0 8px;
    background-color: #f5f7f8;
    border-right: 0;
    border-bottom: 1px solid #babfc2;
    color: #747a7d;
    font-weight: 400;
}
.group-row th {
    height: 33px;
}
.group-row .wide {
    padding-left: 12px;
}
/* short separators between header cells */
thead th::after, thead td::after {
    content: "";
    position: absolute;
    right: 0;
    top: 8px;
    width: 1px;
    height: 16px;
    background-color: #cdd1d3;
}
thead .filler::after, thead .pin-end::after {
    display: none;
}
.pin-end, thead .pin-end {
    border-right: 1px solid #babfc2;
}
.num, .link {
    text-align: right;
}
.name-row svg {
    display: inline;
}
.filter-cell {
    display: flex;
    align-items: center;
    gap: 14px;
    padding-right: 2px;
}
.filter-input {
    flex: 1;
    min-width: 0;
    width: 0;
    height: 20px;
    border: 1px solid #95a5a6;
    border-radius: 3px;
    background-color: #fff;
}
.filter-input.date {
    display: flex;
    align-items: center;
    padding: 0 4px 0 5px;
    color: #222;
}
.filter-input.date input {
    flex: 1;
    min-width: 0;
    width: 0;
    border: 0;
    padding: 0;
    outline: 0;
}
input::placeholder {
    color: #777;
    opacity: 1;
}
tbody tr:nth-child(even) td {
    background-color: #f6f6f6;
}
tbody td {
    color: #000;
}
tbody .icon {
    padding: 0 6px;
}
tbody a {
    color: #0000ee;
}
tfoot td {
    position: sticky;
    bottom: 0;
    background-color: #208f9d;
    color: #fff;
    font-size: 12px;
    font-weight: 700;
    border-top: 1px solid #babfc2;
    border-bottom: 0;
}
td.filler, th.filler {
    padding: 0;
    border-right: 0;
}

/* scrollbars */
.vscroll {
    position: absolute;
    right: 0;
    width: 11px;
    padding: 4px 0;
    background-color: #fde8d3;
    color: #ff9029;
    display: flex;
    flex-direction: column;
    align-items: center;
    justify-content: space-between;
    gap: 3px;
}
.vscroll.rows {
    top: 97px;
    bottom: 28px;
}
.vscroll.totals {
    bottom: 0;
    height: 27px;
}
.vscroll .up {
    transform: rotate(180deg);
}
.vscroll .thumb {
    flex: 1;
    width: 7px;
    background-color: #ff9029;
}
.hscroll {
    height: 12px;
    flex: none;
    padding-right: 11px;
    display: flex;
}
.track {
    flex: 1;
    padding: 0 2px;
    background-color: #fde8d3;
    color: #ff9029;
    display: flex;
    align-items: center;
    gap: 3px;
}
.track.pinned {
    flex: none;
    width: 228px;
    border-right: 1px solid #babfc2;
}
.track .left {
    transform: rotate(90deg);
}
.track .right {
    transform: rotate(-90deg);
}
.rail {
    flex: 1;
}
.rail .thumb {
    display: block;
    width: 34%;
    height: 7px;
    background-color: #ff9029;
}

/* column / filter panel tabs */
.side-tabs {
    width: 21px;
    flex: none;
    padding-top: 16px;
    border-left: 1px solid #babfc2;
}
.side-tab {
    writing-mode: vertical-rl;
    width: 20px;
    padding: 11px 0;
    border-top: 1px solid #babfc2;
    border-bottom: 1px solid #babfc2;
    color: #222;
    font-size: 11px;
    display: flex;
    align-items: center;
    gap: 5px;
}
.side-tab svg {
    transform: rotate(-90deg);
}
.status-bar {
    height: 35px;
    flex: none;
    padding: 0 20px;
    border-top: 1px solid #babfc2;
    color: #999;
    font-size: 12px;
    line-height: 36px;
}
.status-bar b {
    color: #222;
    font-weight: 400;
}
```
